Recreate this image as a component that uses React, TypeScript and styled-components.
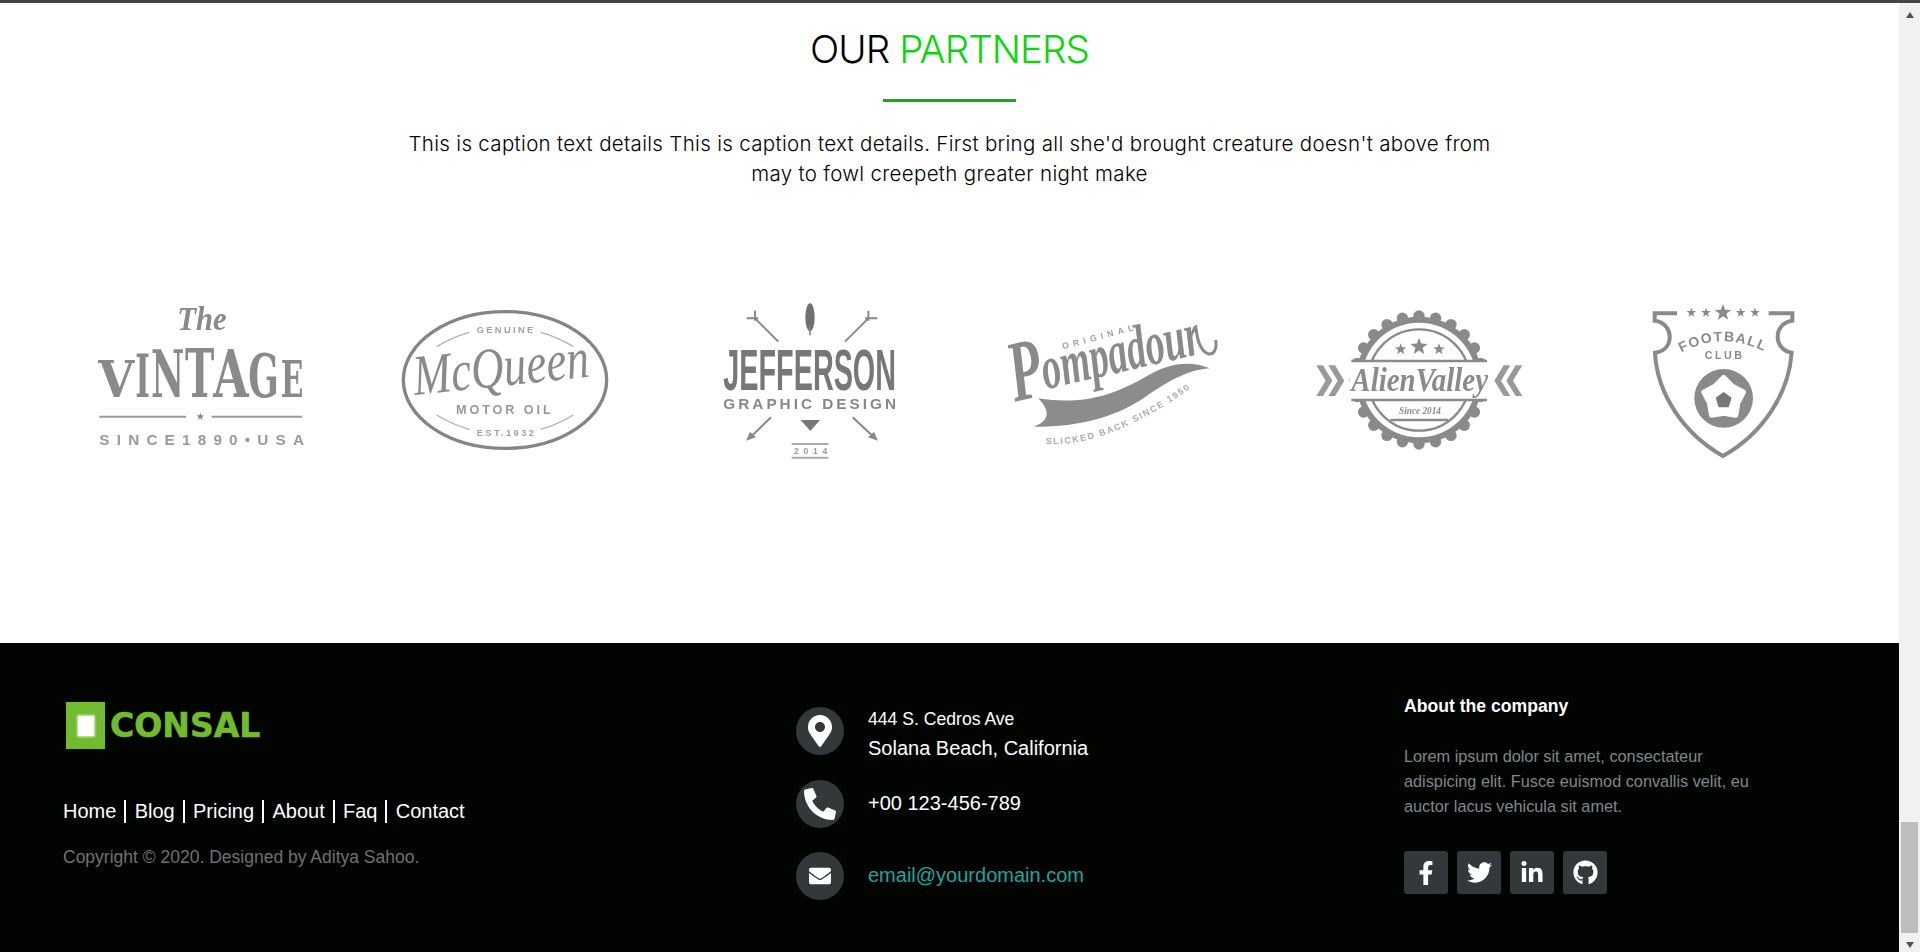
import React from "react";
import styled, { createGlobalStyle } from "styled-components";
import {
  FaMapMarkerAlt,
  FaPhoneAlt,
  FaEnvelope,
  FaFacebookF,
  FaTwitter,
  FaLinkedinIn,
  FaGithub,
} from "react-icons/fa";

const GlobalStyle = createGlobalStyle`
  html, body {
    margin: 0;
    height: 952px;
    overflow: hidden;
    background: #fff;
    font-family: "Liberation Sans", Arial, sans-serif;
  }
`;

const starPoints = (cx: number, cy: number, r: number) => {
  const pts: string[] = [];
  for (let i = 0; i < 10; i++) {
    const rad = i % 2 === 0 ? r : r * 0.42;
    const a = -Math.PI / 2 + (i * Math.PI) / 5;
    pts.push(`${cx + rad * Math.cos(a)},${cy + rad * Math.sin(a)}`);
  }
  return pts.join(" ");
};

const Star = ({ x, y, r }: { x: number; y: number; r: number }) => (
  <polygon points={starPoints(x, y, r)} fill="#8a8a8a" />
);

const vintageLetters = [
  { c: "V", x: 85, w: 108, h: 112 },
  { c: "I", x: 196, w: 44, h: 130 },
  { c: "N", x: 243, w: 100, h: 142 },
  { c: "T", x: 345, w: 88, h: 147 },
  { c: "A", x: 430, w: 106, h: 142 },
  { c: "G", x: 535, w: 92, h: 130 },
  { c: "E", x: 632, w: 68, h: 112 },
];

const VintageLogo = () => (
  <LogoSvg viewBox="-27 0 840 570">
    <Script x="322" y="150" fontSize="104" textLength="148" lengthAdjust="spacingAndGlyphs">
      The
    </Script>
    {vintageLetters.map((l) => (
      <Slab key={l.c} x={l.x} y="352" fontSize={l.h / 0.73} textLength={l.w} lengthAdjust="spacingAndGlyphs">
        {l.c}
      </Slab>
    ))}
    <line x1="88" y1="410" x2="348" y2="410" stroke="#999" strokeWidth="6" />
    <line x1="425" y1="410" x2="697" y2="410" stroke="#999" strokeWidth="6" />
    <Star x={391} y={410} r={12} />
    <Plain x="88" y="494" fontSize="46" fontWeight="700" textLength="614" $tone="#999">
      SINCE1890•USA
    </Plain>
  </LogoSvg>
);

const McQueenLogo = () => (
  <LogoSvg viewBox="-45 0 840 570">
    <ellipse cx="375" cy="300" rx="305" ry="205" fill="none" stroke="#858585" strokeWidth="10" />
    <Plain x="290" y="160" fontSize="28" fontWeight="700" textLength="170" $tone="#a0a0a0">
      GENUINE
    </Plain>
    <g fill="none" stroke="#b0b0b0" strokeWidth="4">
      <path d="M170 200 Q215 172 268 157" />
      <path d="M482 157 Q535 172 580 200" />
      <path d="M170 405 Q215 433 268 448" />
      <path d="M482 448 Q535 433 580 405" />
    </g>
    <Script
      $thin
      x="105"
      y="345"
      fontSize="172"
      textLength="530"
      lengthAdjust="spacingAndGlyphs"
      transform="rotate(-6 105 345)"
    >
      McQueen
    </Script>
    <Plain x="228" y="402" fontSize="38" textLength="284" fontWeight="700" $tone="#999">
      MOTOR OIL
    </Plain>
    <Plain x="290" y="467" fontSize="28" fontWeight="700" textLength="172" $tone="#a0a0a0">
      EST.1932
    </Plain>
  </LogoSvg>
);

const JeffersonLogo = () => (
  <LogoSvg viewBox="-60 0 840 570">
    <ellipse cx="360" cy="112" rx="14" ry="42" fill="#707070" />
    <line x1="360" y1="140" x2="360" y2="166" stroke="#888" strokeWidth="5" />
    <g fill="none" stroke="#888" strokeWidth="6">
      <path d="M265 185 L195 115 M170 115 H205 M195 92 V122" />
      <path d="M465 185 L535 115 M562 115 H525 M535 92 V122" />
      <path d="M243 412 L185 468" />
      <path d="M488 412 L548 468" />
    </g>
    <polygon points="168,482 180,455 198,472" fill="#888" />
    <polygon points="564,482 552,455 534,472" fill="#888" />
    <Plain fontSize="172" fontWeight="700" transform="translate(100 330) scale(0.502 1)" $tone="#777">
      JEFFERSON
    </Plain>
    <Plain x="100" y="388" fontSize="46" fontWeight="700" textLength="518" $tone="#888">
      GRAPHIC DESIGN
    </Plain>
    <polygon points="332,420 390,420 361,453" fill="#777" />
    <line x1="305" y1="492" x2="415" y2="492" stroke="#aaa" strokeWidth="6" />
    <line x1="305" y1="533" x2="415" y2="533" stroke="#aaa" strokeWidth="6" />
    <Plain x="312" y="523" fontSize="26" fontWeight="700" textLength="100" $tone="#999">
      2014
    </Plain>
  </LogoSvg>
);

const PompadourLogo = () => (
  <LogoSvg viewBox="-45 0 840 570">
    <Plain
      x="222"
      y="208"
      fontSize="26"
      fontWeight="700"
      textLength="220"
      transform="rotate(-15 222 208)"
      $tone="#a0a0a0"
    >
      ORIGINAL
    </Plain>
    <Script fontSize="185" transform="translate(78 365) rotate(-13) scale(0.62 1)">
      <tspan fontSize="260">P</tspan>
      <tspan dy="-15">ompadour</tspan>
    </Script>
    <path d="M622 150 C630 240 690 240 680 180" fill="none" stroke="#8a8a8a" strokeWidth="9" />
    <path
      d="M148 355 C300 380 400 330 470 290 C540 250 600 240 662 265 C590 270 530 310 470 350 C380 410 280 440 135 440 C175 425 190 400 148 355 Z"
      fill="#8c8c8c"
    />
    <path id="pompadourCurve" d="M170 492 C300 500 450 440 640 300" fill="none" />
    <Plain fontSize="27" fontWeight="700" letterSpacing="5" $tone="#ababab">
      <textPath href="#pompadourCurve">SLICKED BACK SINCE 1950</textPath>
    </Plain>
  </LogoSvg>
);

const gearTeeth = Array.from({ length: 24 }, (_, i) => (i * Math.PI) / 12);

const AlienValleyLogo = () => (
  <LogoSvg viewBox="-62 0 840 570">
    <circle cx="358" cy="300" r="190" fill="#8a8a8a" />
    {gearTeeth.map((a) => (
      <circle key={a} cx={358 + 192 * Math.cos(a)} cy={300 + 192 * Math.sin(a)} r="17" fill="#8a8a8a" />
    ))}
    <circle cx="358" cy="300" r="172" fill="#fff" />
    <circle cx="358" cy="300" r="152" fill="none" stroke="#8a8a8a" strokeWidth="7" />
    <rect x="150" y="243" width="420" height="117" fill="#fff" />
    <line x1="155" y1="243" x2="562" y2="243" stroke="#8a8a8a" strokeWidth="8" />
    <line x1="155" y1="360" x2="562" y2="360" stroke="#8a8a8a" strokeWidth="8" />
    <Star x={358} y={200} r={27} />
    <Star x={303} y={208} r={18} />
    <Star x={418} y={208} r={18} />
    <Script x="155" y="333" fontSize="104" textLength="410" lengthAdjust="spacingAndGlyphs">
      AlienValley
    </Script>
    <Script x="298" y="401" fontSize="30" textLength="126" lengthAdjust="spacingAndGlyphs">
      Since 2014
    </Script>
    <line x1="272" y1="420" x2="446" y2="420" stroke="#8a8a8a" strokeWidth="7" />
    <g fill="#999">
      <polygon points="50,256 70,256 98,302 70,348 50,348 78,302" />
      <polygon points="86,256 106,256 134,302 106,348 86,348 114,302" />
      <polygon points="668,256 648,256 620,302 648,348 668,348 640,302" />
      <polygon points="632,256 612,256 584,302 612,348 632,348 604,302" />
    </g>
  </LogoSvg>
);

const FootballLogo = () => (
  <LogoSvg viewBox="-50 0 840 570">
    <path
      d="M232 100 H165 V122 C195 125 212 150 210 175 C208 200 190 215 166 218 C172 340 250 460 370 528 C490 460 568 340 576 218 C552 215 534 195 534 170 C534 145 552 125 578 122 V100 H507"
      fill="none"
      stroke="#8a8a8a"
      strokeWidth="12"
    />
    <Star x={370} y={98} r={26} />
    <Star x={275} y={98} r={15} />
    <Star x={319} y={98} r={15} />
    <Star x={423} y={98} r={15} />
    <Star x={466} y={98} r={15} />
    <path id="footballCurve" d="M245 218 Q370 150 500 218" fill="none" />
    <Plain fontSize="42" fontWeight="700" letterSpacing="4" $tone="#8a8a8a">
      <textPath href="#footballCurve">FOOTBALL</textPath>
    </Plain>
    <Plain x="315" y="237" fontSize="32" fontWeight="700" textLength="112" $tone="#8a8a8a">
      CLUB
    </Plain>
    <circle cx="372" cy="355" r="88" fill="#8a8a8a" />
    <polygon
      points="372,293 398,319 431,336 414,369 408,405 372,399 336,405 330,369 313,336 346,319"
      fill="#fff"
      stroke="#fff"
      strokeWidth="16"
      strokeLinejoin="round"
    />
    <polygon points="372,336 396,353 387,382 357,382 348,353" fill="#777" />
  </LogoSvg>
);

const App = () => {
  return (
    <>
      <GlobalStyle />
      <TopBar />
      <Screen>
        <Main>
          <Partners>
            <Title>
              OUR <Accent>PARTNERS</Accent>
            </Title>
            <TitleRule />
            <Caption>
              This is caption text details This is caption text details. First bring all she'd brought creature
              doesn't above from
              <br />
              may to fowl creepeth greater night make
            </Caption>
            <LogoRow>
              <VintageLogo />
              <McQueenLogo />
              <JeffersonLogo />
              <PompadourLogo />
              <AlienValleyLogo />
              <FootballLogo />
            </LogoRow>
          </Partners>
          <Footer>
            <BrandColumn>
              <Brand>
                <BrandMark>
                  <BrandWindow />
                </BrandMark>
                <BrandName>CONSAL</BrandName>
              </Brand>
              <NavList>
                <NavItem>Home</NavItem>
                <NavItem>Blog</NavItem>
                <NavItem>Pricing</NavItem>
                <NavItem>About</NavItem>
                <NavItem>Faq</NavItem>
                <NavItem $last>Contact</NavItem>
              </NavList>
              <Copyright>Copyright © 2020. Designed by Aditya Sahoo.</Copyright>
            </BrandColumn>
            <ContactColumn>
              <ContactRow>
                <ContactIcon>
                  <FaMapMarkerAlt size={32} />
                </ContactIcon>
                <ContactStack>
                  <ContactSmall>444 S. Cedros Ave</ContactSmall>
                  <ContactLine>Solana Beach, California</ContactLine>
                </ContactStack>
              </ContactRow>
              <ContactRow>
                <ContactIcon>
                  <FaPhoneAlt size={32} />
                </ContactIcon>
                <ContactLine>+00 123-456-789</ContactLine>
              </ContactRow>
              <ContactRow>
                <ContactIcon>
                  <FaEnvelope size={22} />
                </ContactIcon>
                <ContactLine $link>email@yourdomain.com</ContactLine>
              </ContactRow>
            </ContactColumn>
            <AboutColumn>
              <AboutTitle>About the company</AboutTitle>
              <AboutText>
                Lorem ipsum dolor sit amet, consectateur adispicing elit. Fusce euismod convallis velit, eu auctor
                lacus vehicula sit amet.
              </AboutText>
              <SocialRow>
                <SocialButton>
                  <FaFacebookF size={24} />
                </SocialButton>
                <SocialButton>
                  <FaTwitter size={25} />
                </SocialButton>
                <SocialButton>
                  <FaLinkedinIn size={24} />
                </SocialButton>
                <SocialButton>
                  <FaGithub size={25} />
                </SocialButton>
              </SocialRow>
            </AboutColumn>
          </Footer>
        </Main>
        <ScrollTrack>
          <ArrowUp />
          <ScrollThumb />
          <ArrowDown />
        </ScrollTrack>
      </Screen>
    </>
  );
};

export default App;

const TopBar = styled.div`
  height: 3px;
  background: #444;
`;

const Screen = styled.div`
  display: flex;
  height: 949px;
`;

const Main = styled.main`
  flex: 1;
  min-width: 0;
  display: flex;
  flex-direction: column;
`;

const Partners = styled.section`
  height: 640px;
  padding-top: 16px;
  box-sizing: border-box;
  background: #fff;
  text-align: center;
`;

const Title = styled.h2`
  margin: 0;
  font-family: "Inter", sans-serif;
  font-size: 38.5px;
  font-weight: 300;
  letter-spacing: -0.9px;
  line-height: 60px;
  color: #000;
`;

const Accent = styled.span`
  color: #0bd50b;
`;

const TitleRule = styled.div`
  width: 133px;
  height: 3px;
  margin: 20px auto 0;
  background: #10b010;
`;

const Caption = styled.p`
  margin: 27px 0 0;
  font-family: "Inter", sans-serif;
  font-size: 20.5px;
  font-weight: 300;
  letter-spacing: 0.32px;
  line-height: 30px;
  color: #000;
`;

const LogoRow = styled.div`
  display: flex;
  gap: 24.4px;
  margin-top: 91px;
  padding-left: 61px;
`;

const LogoSvg = styled.svg`
  flex: none;
  width: 280px;
  height: 190px;
  filter: blur(0.5px);
`;

const Script = styled.text<{ $thin?: boolean }>`
  font-family: "Liberation Serif", serif;
  font-style: italic;
  font-weight: ${(p) => (p.$thin ? 400 : 700)};
  fill: #8a8a8a;
`;

const Slab = styled.text`
  font-family: "DejaVu Serif", serif;
  font-weight: 700;
  fill: #8a8a8a;
`;

const Plain = styled.text<{ $tone: string }>`
  font-family: "Liberation Sans", sans-serif;
  fill: ${(p) => p.$tone};
`;

const Footer = styled.footer`
  flex: 1;
  display: grid;
  grid-template-columns: 733px 608px 1fr;
  padding-left: 63px;
  background: #020402;
`;

const BrandColumn = styled.div`
  padding-top: 59px;
`;

const Brand = styled.div`
  display: flex;
  align-items: center;
  gap: 5px;
  height: 47px;
  margin-left: 3px;
`;

const BrandMark = styled.div`
  width: 39px;
  height: 47px;
  display: flex;
  align-items: center;
  justify-content: center;
  background: #72bb2e;
`;

const BrandWindow = styled.div`
  width: 16px;
  height: 20px;
  background: #fff;
  box-shadow: 0 0 2px 1px #d8eec4;
`;

const BrandName = styled.span`
  font-family: "DejaVu Sans", sans-serif;
  font-size: 33px;
  font-weight: 700;
  line-height: 47px;
  -webkit-text-stroke: 0.6px #72bb2e;
  color: #72bb2e;
`;

const NavList = styled.nav`
  display: flex;
  margin-top: 51px;
`;

const NavItem = styled.span<{ $last?: boolean }>`
  height: 23px;
  padding-right: ${(p) => (p.$last ? 0 : 8)}px;
  margin-right: ${(p) => (p.$last ? 0 : 8.3)}px;
  border-right: ${(p) => (p.$last ? "none" : "2px solid #fff")};
  font-size: 20px;
  line-height: 23px;
  color: #fff;
`;

const Copyright = styled.p`
  margin: 22px 0 0;
  font-size: 17.5px;
  line-height: 24px;
  color: #707070;
`;

const ContactColumn = styled.div`
  display: flex;
  flex-direction: column;
  gap: 24.5px;
  padding-top: 64px;
`;

const ContactRow = styled.div`
  display: flex;
  align-items: center;
  gap: 24px;
  height: 48px;
`;

const ContactIcon = styled.span`
  flex: none;
  width: 48px;
  height: 48px;
  display: flex;
  align-items: center;
  justify-content: center;
  border-radius: 50%;
  background: #33393b;
  color: #fff;
`;

const ContactStack = styled.div`
  margin-top: 6px;
`;

const ContactSmall = styled.div`
  font-size: 17.6px;
  line-height: 29px;
  color: #fff;
`;

const ContactLine = styled.div<{ $link?: boolean }>`
  margin-bottom: 2px;
  font-size: 20px;
  line-height: 28px;
  color: ${(p) => (p.$link ? "#1aa6a0" : "#fff")};
`;

const AboutColumn = styled.div`
  padding-top: 51px;
`;

const AboutTitle = styled.h4`
  margin: 0;
  font-size: 17.6px;
  font-weight: 700;
  line-height: 24px;
  color: #fff;
`;

const AboutText = styled.p`
  max-width: 360px;
  margin: 26px 0 0;
  font-size: 16.3px;
  line-height: 25px;
  color: #80878d;
`;

const SocialRow = styled.div`
  display: flex;
  gap: 9px;
  margin-top: 32px;
`;

const SocialButton = styled.span`
  width: 44px;
  height: 43px;
  display: flex;
  align-items: center;
  justify-content: center;
  border-radius: 3px;
  background: #33393b;
  color: #fff;
`;

const ScrollTrack = styled.div`
  flex: none;
  width: 21px;
  display: flex;
  flex-direction: column;
  align-items: center;
  background: #f1f1f1;
`;

const ArrowUp = styled.div`
  margin-top: 9px;
  border-left: 4.5px solid transparent;
  border-right: 4.5px solid transparent;
  border-bottom: 6px solid #505050;
`;

const ScrollThumb = styled.div`
  width: 17px;
  height: 111px;
  margin-top: auto;
  background: #bdbdbd;
`;

const ArrowDown = styled.div`
  margin: 9px 0 4px;
  border-left: 4.5px solid transparent;
  border-right: 4.5px solid transparent;
  border-top: 6px solid #505050;
`;
